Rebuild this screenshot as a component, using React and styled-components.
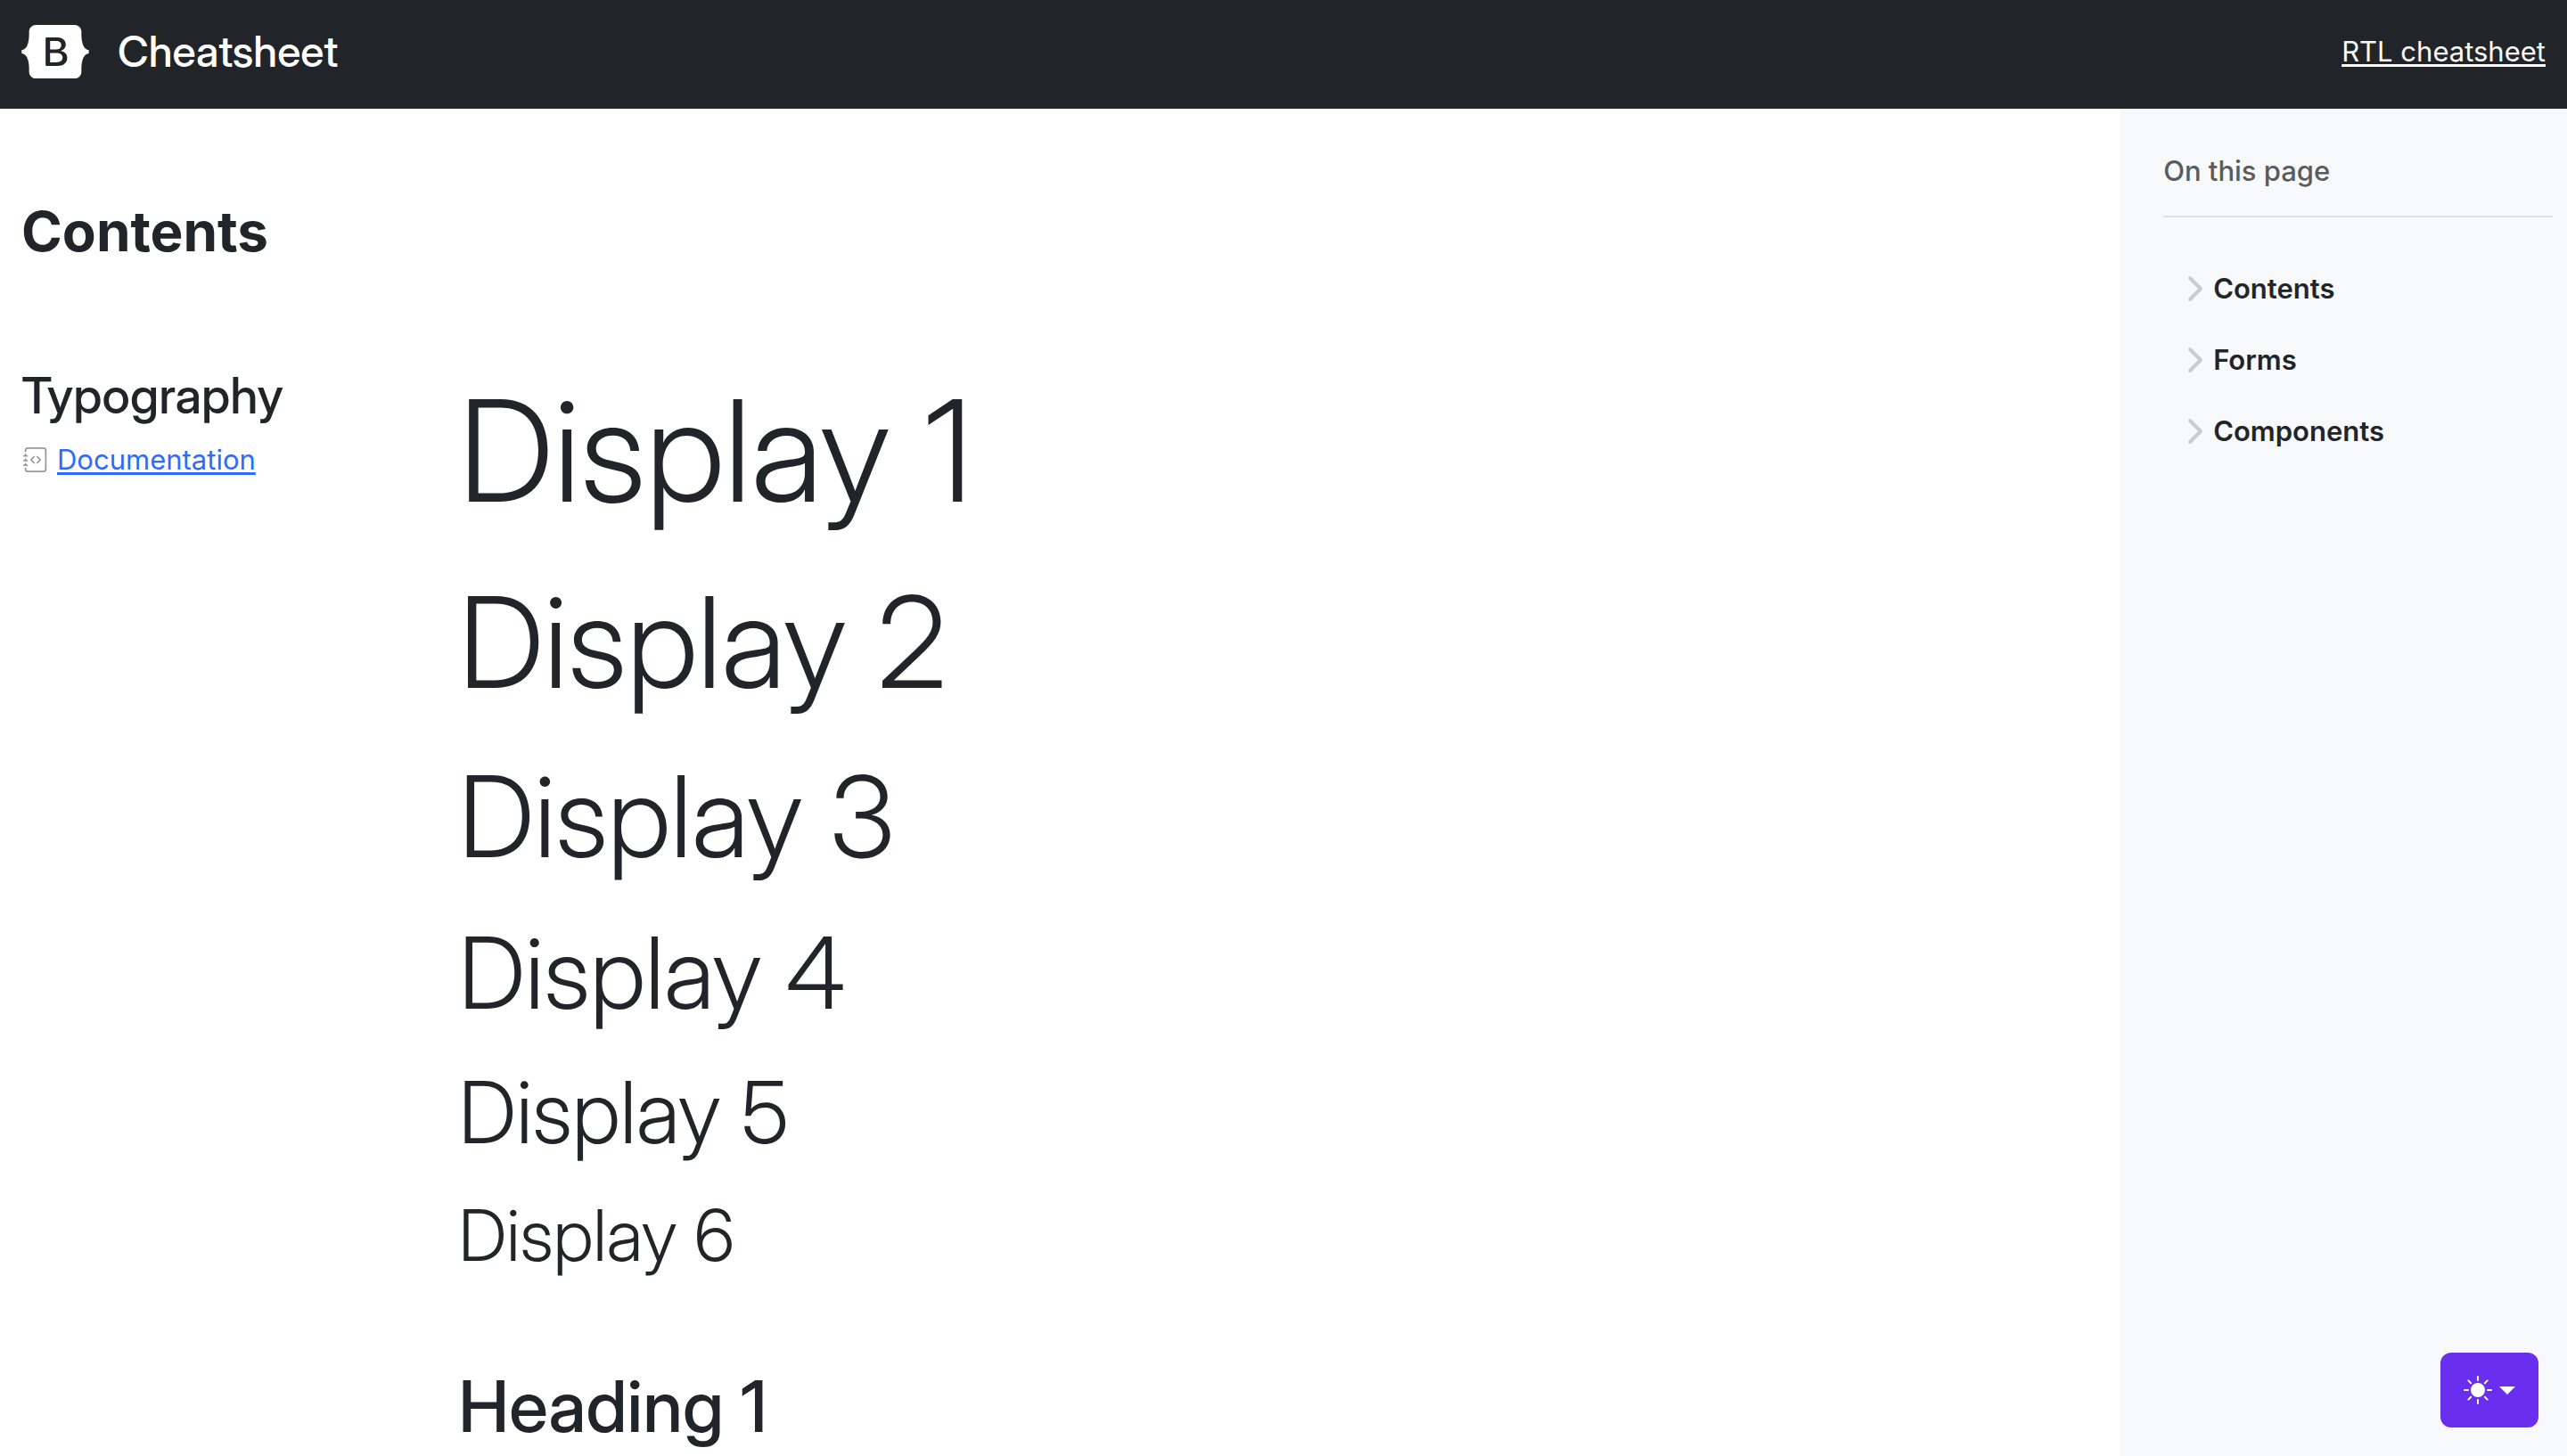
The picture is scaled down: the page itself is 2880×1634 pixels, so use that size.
import React from "react";
import styled, { createGlobalStyle } from "styled-components";
import { BsJournalCode, BsSunFill } from "react-icons/bs";

const displayFont = `"Inter Display", Inter, "Liberation Sans", sans-serif`;

const GlobalStyle = createGlobalStyle`
  *, *::before, *::after { box-sizing: border-box; }
  body {
    margin: 0;
    background: #fff;
    color: #212529;
    font-family: Inter, "Liberation Sans", sans-serif;
    font-size: 31px;
    line-height: 48px;
  }
`;

const Header = styled.header`
  display: flex;
  align-items: center;
  justify-content: space-between;
  padding: 28px 24px 34px;
  background: #212529;
  color: #fff;
`;

const Brand = styled.h1`
  display: flex;
  align-items: center;
  gap: 32px;
  margin: 0;
  font-family: ${displayFont};
  font-size: 48px;
  font-weight: 500;
  line-height: 60px;
`;

const Logo = styled.svg`
  display: block;
  width: 76px;
  height: 60px;
`;

const TextLink = styled.a`
  color: ${(p) => (p.$light ? "#f8f9fa" : "#2f6bfb")};
  text-decoration-thickness: 3px;
  text-underline-offset: 3px;
`;

const Body = styled.div`
  display: grid;
  grid-template-columns: 19fr 4fr;
  min-height: calc(100vh - 122px);
`;

const Main = styled.main`
  padding: 96px 0 0 24px;
`;

const SectionTitle = styled.h2`
  margin: 0 0 96px;
  font-size: 62px;
  font-weight: 700;
  line-height: 84px;
`;

const Article = styled.article`
  display: grid;
  grid-template-columns: 1fr 4fr;
  gap: 24px;
`;

const ArticleTitle = styled.h3`
  margin: 12px 0 14px;
  font-family: ${displayFont};
  font-size: 56px;
  font-weight: 500;
  line-height: 68px;
`;

const DocLine = styled.div`
  display: flex;
  align-items: center;
  gap: 10px;
  padding-left: 2px;

  svg {
    flex: none;
    width: 28px;
    height: 28px;
    color: #999;
  }
`;

const Samples = styled.div`
  padding-top: 12px;
  font-family: ${displayFont};
`;

const Display = styled.p`
  margin: 0 0 32px;
  font-size: ${(p) => p.$size}px;
  font-weight: 300;
  line-height: ${(p) => p.$line}px;
`;

const SampleHeading = styled.p`
  margin: 96px 0 0;
  font-size: 80px;
  font-weight: 500;
  line-height: 96px;
`;

const Aside = styled.aside`
  padding: 46px 16px 0 48px;
  background: #f8f9fa;
`;

const AsideTitle = styled.h2`
  margin: 0 0 48px;
  padding-bottom: 26px;
  border-bottom: 2px solid #dee2e6;
  color: #595c5f;
  font-size: 31px;
  font-weight: 500;
  line-height: 48px;
`;

const Nav = styled.ul`
  display: grid;
  gap: 16px;
  margin: 0;
  padding: 0 0 0 20px;
  list-style: none;
`;

const NavButton = styled.button`
  display: flex;
  align-items: center;
  gap: 4px;
  padding: 8px 0;
  border: 0;
  background: transparent;
  color: #212529;
  font: inherit;
  font-weight: 600;

  svg {
    width: 32px;
    height: 32px;
  }
`;

const ThemeButton = styled.button`
  position: fixed;
  right: 32px;
  bottom: 32px;
  display: flex;
  align-items: center;
  gap: 8px;
  padding: 26px;
  border: 0;
  border-radius: 12px;
  background: #6a2eef;
  color: #fff;

  svg {
    width: 32px;
    height: 32px;
  }
`;

const Caret = styled.span`
  border: 9px solid transparent;
  border-top-color: currentColor;
  border-bottom: 0;
`;

const displays = [
  { text: "Display 1", size: 158, line: 192 },
  { text: "Display 2", size: 142, line: 173 },
  { text: "Display 3", size: 126, line: 154 },
  { text: "Display 4", size: 111, line: 134 },
  { text: "Display 5", size: 96, line: 115 },
  { text: "Display 6", size: 80, line: 96 },
];

const sections = ["Contents", "Forms", "Components"];

export default function App() {
  return (
    <>
      <GlobalStyle />
      <Header>
        <Brand>
          <Logo viewBox="0 0 118 94" role="img" aria-label="Bootstrap">
            <path
              fill="currentColor"
              fillRule="evenodd"
              clipRule="evenodd"
              d="M24.509 0c-6.733 0-11.715 5.893-11.492 12.284.214 6.14-.064 14.092-2.066 20.577C8.943 39.365 5.547 43.485 0 44.014v5.972c5.547.529 8.943 4.649 10.951 11.153 2.002 6.485 2.28 14.437 2.066 20.577C12.794 88.106 17.776 94 24.51 94H93.5c6.733 0 11.714-5.893 11.491-12.284-.214-6.14.064-14.092 2.066-20.577 2.009-6.504 5.396-10.624 10.943-11.153v-5.972c-5.547-.529-8.934-4.649-10.943-11.153-2.002-6.484-2.28-14.437-2.066-20.577C105.214 5.894 100.233 0 93.5 0H24.508zM80 57.863C80 66.663 73.436 72 62.543 72H44a2 2 0 01-2-2V24a2 2 0 012-2h18.437c9.083 0 15.044 4.92 15.044 12.474 0 5.302-4.01 10.049-9.119 10.88v.277C75.317 46.394 80 51.21 80 57.863zM60.521 28.34H49.948v14.934h8.905c6.884 0 10.68-2.772 10.68-7.727 0-4.643-3.264-7.207-9.012-7.207zM49.948 49.2v16.458H60.91c7.167 0 10.964-2.876 10.964-8.281 0-5.406-3.903-8.178-11.425-8.178H49.948z"
            />
          </Logo>
          Cheatsheet
        </Brand>
        <TextLink href="#rtl" $light>RTL cheatsheet</TextLink>
      </Header>

      <Body>
        <Main>
          <SectionTitle>Contents</SectionTitle>
          <Article>
            <div>
              <ArticleTitle>Typography</ArticleTitle>
              <DocLine>
                <BsJournalCode aria-hidden="true" />
                <TextLink href="#typography">Documentation</TextLink>
              </DocLine>
            </div>
            <Samples>
              {displays.map((d) => (
                <Display key={d.text} $size={d.size} $line={d.line}>{d.text}</Display>
              ))}
              <SampleHeading>Heading 1</SampleHeading>
            </Samples>
          </Article>
        </Main>

        <Aside>
          <AsideTitle>On this page</AsideTitle>
          <Nav>
            {sections.map((name) => (
              <li key={name}>
                <NavButton type="button" aria-expanded="false">
                  <svg viewBox="0 0 16 16" fill="none" aria-hidden="true">
                    <path
                      d="M5 14l6-6-6-6"
                      stroke="#ccc"
                      strokeWidth="2"
                      strokeLinecap="round"
                      strokeLinejoin="round"
                    />
                  </svg>
                  {name}
                </NavButton>
              </li>
            ))}
          </Nav>
        </Aside>
      </Body>

      <ThemeButton type="button" aria-label="Toggle theme">
        <BsSunFill aria-hidden="true" />
        <Caret />
      </ThemeButton>
    </>
  );
}
